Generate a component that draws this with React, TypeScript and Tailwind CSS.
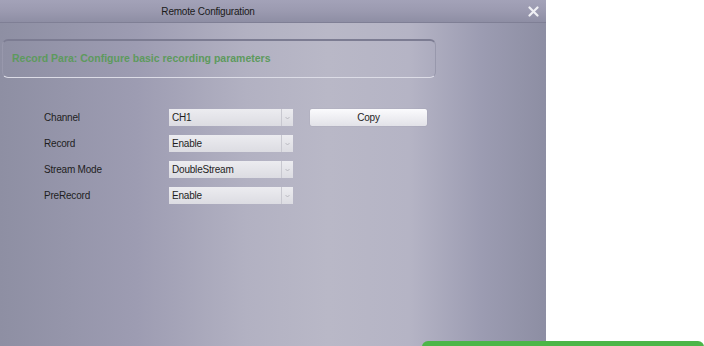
import React from "react";

const font = { fontFamily: '"Liberation Sans", Arial, sans-serif' };

function Select({ value }: { value: string }) {
  return (
    <div className="flex h-[17px] w-[124px] bg-gradient-to-b from-[#ececf0] to-[#dcdce2]">
      <div className="flex flex-1 items-center pl-[3px] text-[10px] leading-none tracking-[-0.2px] text-[#1e1e1e]">{value}</div>
      <div className="flex w-[12px] items-center justify-center border-l border-[#c8c8d0]">
        <svg width="5" height="4" viewBox="0 0 5 4">
          <path d="M0.5 1 L2.5 3 L4.5 1" stroke="#b0b0b8" strokeWidth="0.8" fill="none" />
        </svg>
      </div>
    </div>
  );
}

const rows = [
  { label: "Channel", value: "CH1" },
  { label: "Record", value: "Enable" },
  { label: "Stream Mode", value: "DoubleStream" },
  { label: "PreRecord", value: "Enable" },
];

export default function App() {
  return (
    <div className="relative flex h-[346px] w-[704px] overflow-hidden bg-white" style={font}>
      <div className="flex h-full w-[546px] flex-col bg-[linear-gradient(to_right,#8e8fa3_0%,#9d9cb2_25%,#b2b1c2_45%,#b9b8c7_60%,#b5b4c5_75%,#9c9cb2_88%,#8d8ea3_100%)]">
        <div className="relative flex h-[23px] items-center border-b border-[#7f7f95] bg-gradient-to-b from-[#a3a2b8] via-[#9b9ab0] to-[#8e8ea4]">
          <div className="w-[416px] text-center text-[10px] tracking-[-0.2px] text-[#1a1a1a]">Remote Configuration</div>
          <svg className="absolute left-[528px] top-[6px]" width="11" height="11" viewBox="0 0 11 11">
            <path d="M1.5 1.5 L9.5 9.5 M9.5 1.5 L1.5 9.5" stroke="#f0f0f4" strokeWidth="2.2" strokeLinecap="round" />
          </svg>
        </div>
        <div className="ml-[2px] mt-[16px] flex h-[39px] w-[434px] items-center rounded-[6px] border border-t-2 border-[#9898ac] border-t-[#7c7c92] border-b-[#dcdce6] pl-[9px]">
          <span className="text-[10.5px] font-bold text-[#5d9a5d]">Record Para: Configure basic recording parameters</span>
        </div>
        <div className="mt-[31px] flex flex-col gap-[9px]">
          {rows.map((r, i) => (
            <div key={r.label} className="flex h-[17px] items-center">
              <div className="w-[169px] pl-[44px] text-[10px] tracking-[-0.2px] text-[#1e1e1e]">{r.label}</div>
              <Select value={r.value} />
              {i === 0 && (
                <div className="ml-[17px] flex h-[17px] w-[117px] items-center justify-center rounded-[2px] bg-gradient-to-b from-[#fbfbfd] to-[#e2e2e8] text-[10px] tracking-[-0.2px] text-[#1e1e1e] shadow-[0_0_1px_rgba(0,0,0,0.25)]">
                  Copy
                </div>
              )}
            </div>
          ))}
        </div>
      </div>
      <div className="absolute left-[422px] top-[341px] h-[20px] w-[282px] rounded-[6px] bg-[#4cb648]" />
    </div>
  );
}
